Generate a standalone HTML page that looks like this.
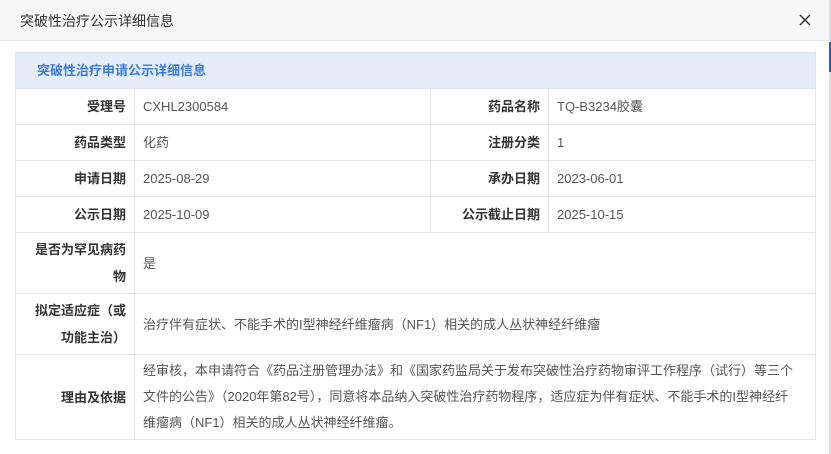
<!DOCTYPE html><html><head><meta charset="utf-8"><style>
body{margin:0;width:831px;height:454px;background:#fff;font-family:"Liberation Sans","Noto Sans CJK SC",sans-serif;font-size:13px;position:relative;overflow:hidden}
.hd{position:absolute;left:0;top:0;width:829px;height:40px;background:#f7f7f7;border-bottom:1px solid #e8e8e8;}
.hd span{position:absolute;left:20px;top:11px;font-size:14px;color:#333}
.x{position:absolute;left:797px;top:12px;width:16px;height:16px}
.sb{position:absolute;left:829px;top:0;width:2px;height:454px;background:#ddd}
.sb i{position:absolute;left:0;top:42px;width:2px;height:30px;background:#2a5caa}
table{position:absolute;left:15px;top:52px;width:800px;border-collapse:collapse;table-layout:fixed}
td{border:1px solid #e6e6e6;padding:0 8px;color:#555;line-height:25px}
td.l{text-align:right;font-weight:bold;color:#333}
.t td{background:#e6edf8;color:#3a7bd5;font-weight:bold;height:35px;padding-left:21px;border-color:#dde5f2}
.w{white-space:nowrap;line-height:26px}
</style></head><body>
<div class="hd"><span>突破性治疗公示详细信息</span>
<svg class="x" viewBox="0 0 16 16"><path d="M3 3L13 13M13 3L3 13" stroke="#333" stroke-width="1.5"/></svg></div>
<div class="sb"><i></i></div>
<table>
<colgroup><col style="width:119px"><col style="width:296px"><col style="width:118px"><col style="width:267px"></colgroup>
<tr class="t"><td colspan="4">突破性治疗申请公示详细信息</td></tr>
<tr style="height:36px"><td class="l">受理号</td><td>CXHL2300584</td><td class="l">药品名称</td><td>TQ-B3234胶囊</td></tr>
<tr style="height:36px"><td class="l">药品类型</td><td>化药</td><td class="l">注册分类</td><td>1</td></tr>
<tr style="height:36px"><td class="l">申请日期</td><td>2025-08-29</td><td class="l">承办日期</td><td>2023-06-01</td></tr>
<tr style="height:36px"><td class="l">公示日期</td><td>2025-10-09</td><td class="l">公示截止日期</td><td>2025-10-15</td></tr>
<tr style="height:61px"><td class="l" style="line-height:27px">是否为罕见病药物</td><td colspan="3">是</td></tr>
<tr style="height:61px"><td class="l" style="line-height:27px">拟定适应症（或功能主治）</td><td colspan="3">治疗伴有症状、不能手术的I型神经纤维瘤病（NF1）相关的成人丛状神经纤维瘤</td></tr>
<tr style="height:85px"><td class="l">理由及依据</td><td colspan="3" class="w">经审核，本申请符合《药品注册管理办法》和《国家药监局关于发布突破性治疗药物审评工作程序（试行）等三个<br>文件的公告》（2020年第82号），同意将本品纳入突破性治疗药物程序，适应症为伴有症状、不能手术的I型神经纤<br>维瘤病（NF1）相关的成人丛状神经纤维瘤。</td></tr>
</table>
</body></html>
